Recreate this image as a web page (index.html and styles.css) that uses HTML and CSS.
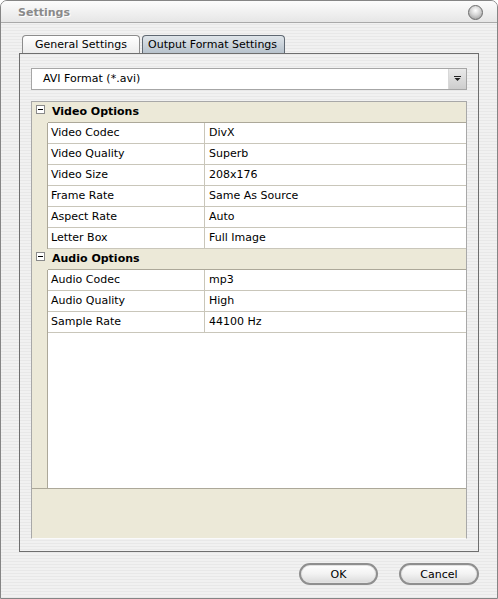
FILE: index.html
```html
<!DOCTYPE html>
<html lang="en">
<head>
    <meta charset="UTF-8">
    <title>Settings</title>
    <link rel="stylesheet" href="styles.css">
</head>
<body>
    <div class="window">
        <div class="titlebar">
            <span class="title">Settings</span>
            <span class="close"></span>
        </div>

        <div class="content">
            <div class="tabs">
                <div class="tab general">General Settings</div>
                <div class="tab output">Output Format Settings</div>
            </div>

            <div class="panel">
                <div class="combo">
                    <span class="combo-text">AVI Format (*.avi)</span>
                    <span class="combo-btn">
                        <svg width="9" height="6" viewBox="0 0 9 6">
                            <path d="M1 0.5H8" stroke="#222" stroke-width="1"/>
                            <path d="M1.5 2H7.5L4.5 5Z" fill="#222"/>
                        </svg>
                    </span>
                </div>

                <div class="grid">
                    <div class="props">
                        <div class="category">
                            <span class="gutter"><span class="toggle"></span></span>
                            <span class="cat-label">Video Options</span>
                        </div>
                        <div class="row"><span class="name">Video Codec</span><span class="value">DivX</span></div>
                        <div class="row"><span class="name">Video Quality</span><span class="value">Superb</span></div>
                        <div class="row"><span class="name">Video Size</span><span class="value">208x176</span></div>
                        <div class="row"><span class="name">Frame Rate</span><span class="value">Same As Source</span></div>
                        <div class="row"><span class="name">Aspect Rate</span><span class="value">Auto</span></div>
                        <div class="row"><span class="name">Letter Box</span><span class="value">Full Image</span></div>
                        <div class="category">
                            <span class="gutter"><span class="toggle"></span></span>
                            <span class="cat-label">Audio Options</span>
                        </div>
                        <div class="row"><span class="name">Audio Codec</span><span class="value">mp3</span></div>
                        <div class="row"><span class="name">Audio Quality</span><span class="value">High</span></div>
                        <div class="row"><span class="name">Sample Rate</span><span class="value">44100 Hz</span></div>
                    </div>
                    <div class="desc"></div>
                </div>
            </div>

            <div class="buttons">
                <button class="btn ok">OK</button>
                <button class="btn cancel">Cancel</button>
            </div>
        </div>
    </div>
</body>
</html>
```

FILE: styles.css
```css
html, body {
    margin: 0;
    padding: 0;
    background: #ffffff;
}

body {
    font-family: "DejaVu Sans", Verdana, sans-serif;
    font-size: 11px;
    color: #000;
}

.window {
    width: 498px;
    height: 599px;
    box-sizing: border-box;
    border: 1px solid #858585;
    border-radius: 7px 7px 0 0;
    overflow: hidden;
    background: repeating-linear-gradient(to bottom, #f1f1f1 0 2px, #e8e8e8 2px 3px);
}

/* title bar */
.titlebar {
    height: 21px;
    border-bottom: 1px solid #a9a9a9;
    display: flex;
    align-items: center;
    justify-content: space-between;
    padding: 0 14px 0 17px;
    background: linear-gradient(to bottom, #fcfcfc, #e6e6e6);
}

.title {
    font-weight: bold;
    font-size: 11px;
    color: #8a8a8a;
    text-shadow: 1px 1px 0 #fff;
    padding-top: 2px;
}

.close {
    width: 13px;
    height: 13px;
    border-radius: 50%;
    border: 1px solid #6a6a6a;
    background: radial-gradient(circle at 50% 35%, #ffffff 0%, #d4d4d4 45%, #8e8e8e 100%);
    margin-top: 1px;
}

/* body */
.content {
    padding: 12px 18px 0 18px;
}

.tabs {
    display: flex;
    gap: 2px;
    height: 18px;
    margin-left: 3px;
}

.tab {
    box-sizing: border-box;
    height: 18px;
    border: 1px solid #8c8c8c;
    border-bottom: none;
    border-radius: 4px 4px 0 0;
    line-height: 17px;
    font-size: 11px;
}

.tab.general {
    width: 118px;
    text-align: center;
    background: linear-gradient(to bottom, #ffffff, #ececec);
}

.tab.output {
    width: 143px;
    padding-left: 5px;
    border-color: #5f6872;
    background: linear-gradient(to bottom, #dfe5ea, #b7c2cc);
}

.panel {
    height: 499px;
    box-sizing: border-box;
    border: 1px solid #6e6e6e;
    padding: 14px 11px 12px 11px;
}

/* combo box */
.combo {
    height: 22px;
    box-sizing: border-box;
    border: 1px solid #a6a6a6;
    background: #fff;
    display: flex;
    align-items: stretch;
}

.combo-text {
    flex: 1;
    padding-left: 11px;
    line-height: 20px;
}

.combo-btn {
    width: 17px;
    display: flex;
    align-items: center;
    justify-content: center;
    background: linear-gradient(to bottom, #e9e9e9, #cdcdcd);
    border-left: 1px solid #d8d8d8;
}

/* property grid */
.grid {
    margin-top: 11px;
    height: 438px;
    box-sizing: border-box;
    border: 1px solid #a8a8a8;
    border-bottom-color: #fafafa;
    display: flex;
    flex-direction: column;
}

.props {
    height: 386px;
    background: linear-gradient(to right, #ece9d8 15px, #aca899 15px 16px, #ffffff 16px);
}

.category {
    display: flex;
    height: 21px;
    background: #ece9d8;
}

.gutter {
    width: 16px;
    display: flex;
    justify-content: center;
    padding-top: 3px;
}

.toggle {
    width: 7px;
    height: 7px;
    border: 1px solid #8a8a8a;
    background: linear-gradient(#000, #000) center / 5px 1px no-repeat, #fff;
}

.cat-label {
    flex: 1;
    font-weight: bold;
    padding-left: 4px;
    line-height: 20px;
    border-bottom: 1px solid #aca899;
}

.row {
    display: flex;
    height: 21px;
    margin-left: 16px;
    box-sizing: border-box;
    border-bottom: 1px solid #c9c6ba;
    line-height: 20px;
    background: #fff;
}

.name {
    width: 157px;
    padding-left: 3px;
    box-sizing: border-box;
    border-right: 1px solid #c9c6ba;
}

.value {
    flex: 1;
    padding-left: 4px;
}

.desc {
    flex: 1;
    border-top: 1px solid #aca899;
    background: #ece9d8;
}

/* dialog buttons */
.buttons {
    display: flex;
    justify-content: flex-end;
    gap: 21px;
    margin-top: 11px;
}

.btn {
    width: 79px;
    height: 22px;
    border: 2px solid #8f8f8f;
    border-radius: 11px;
    background: linear-gradient(to bottom, #ffffff, #f2f2f2 50%, #dadada);
    box-shadow: inset 0 0 0 1px #e2e2e2;
    font-family: "DejaVu Sans", Verdana, sans-serif;
    font-size: 11px;
    color: #000;
    padding: 0;
}

.btn.cancel {
    width: 80px;
}
```
